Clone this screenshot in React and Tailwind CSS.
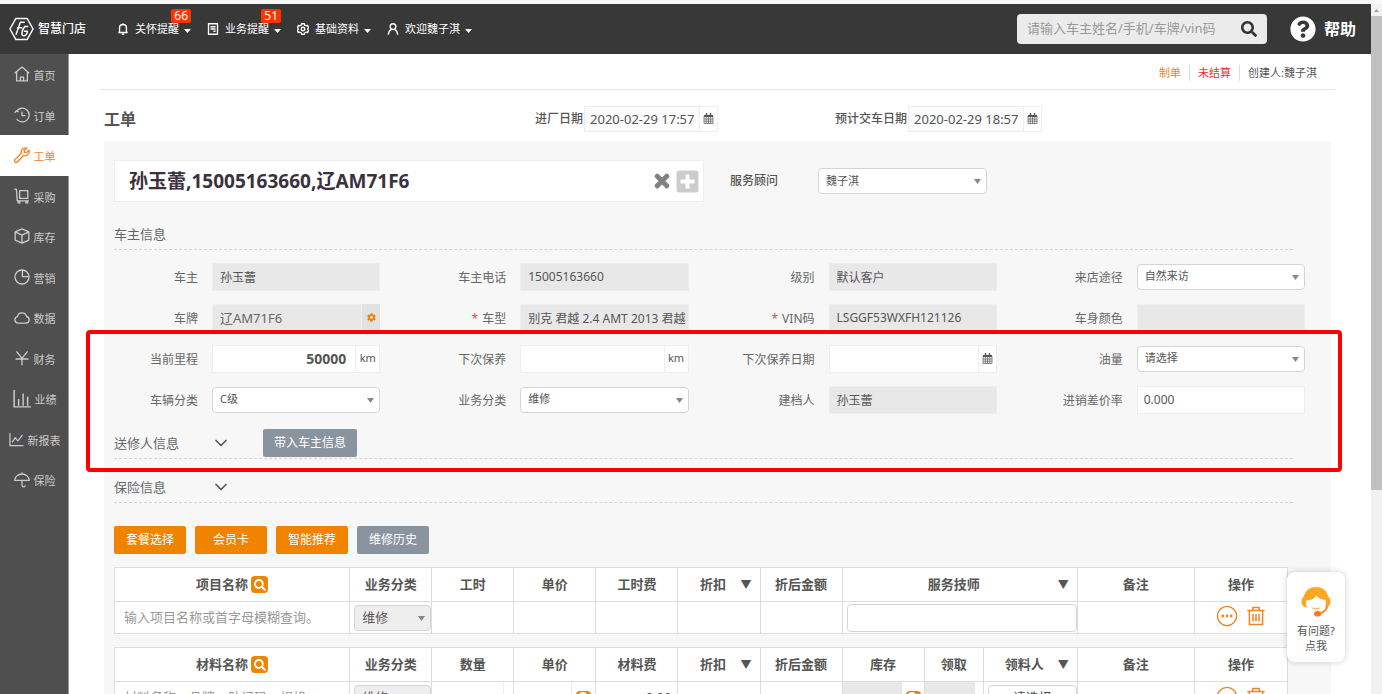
import { FaCog, FaPlusSquare, FaQuestionCircle, FaSearch, FaTimes } from "react-icons/fa";
import { ChevronDown } from "lucide-react";

function LineIcon({ children, className = "size-4", strokeWidth = 1.3 }) {
  return (
    <svg
      viewBox="0 0 16 16"
      className={className}
      fill="none"
      stroke="currentColor"
      strokeWidth={strokeWidth}
      strokeLinejoin="round"
      aria-hidden="true"
    >
      {children}
    </svg>
  );
}

const menuItems = [
  {
    name: "首页",
    icon: (
      <LineIcon>
        <path d="M.7 7.2 8 .9l7.3 6.3M2.6 5.8v9h10.8v-9M6.4 14.8v-3.6h3.2v3.6" />
      </LineIcon>
    ),
  },
  {
    name: "订单",
    icon: (
      <LineIcon>
        <path d="M2.4 4.4A6.9 6.9 0 1 1 2.6 12M.6 5.8l1.6-2 2.4 1M8 4.4v4.2h3.4" />
      </LineIcon>
    ),
  },
  {
    name: "工单",
    active: true,
    icon: (
      <LineIcon>
        <path d="M12.9 1.2a4.1 4.1 0 0 0-5.5 5L1 12.4a1.5 1.5 0 0 0 2.5 2.4l6.1-6.3a4.1 4.1 0 0 0 5.3-5.3l-2.5 2.4-1.9-.2-.3-1.8z" />
      </LineIcon>
    ),
  },
  {
    name: "采购",
    icon: (
      <LineIcon>
        <path d="M.2 1.2h2.200l.8 11.600h11.600M5.600 2.600h8.200v7.800H5.600z" />
        <circle cx="5" cy="14.2" r="1" />
        <circle cx="12.8" cy="14.2" r="1" />
      </LineIcon>
    ),
  },
  {
    name: "库存",
    icon: (
      <LineIcon>
        <path d="m8 .9 6.8 3v8.2L8 15.2l-6.8-3.1V3.9zM1.2 3.9 8 7.2l6.8-3.3M8 7.2v8" />
      </LineIcon>
    ),
  },
  {
    name: "营销",
    icon: (
      <LineIcon>
        <circle cx="8" cy="8" r="7" />
        <path d="M8.4 1v6.6H15" />
      </LineIcon>
    ),
  },
  {
    name: "数据",
    icon: (
      <LineIcon>
        <path d="M4 13.2a3.300 3.300 0 0 1-.5-6.500 4.600 4.600 0 0 1 9-.2 3.400 3.400 0 0 1-.4 6.700z" />
      </LineIcon>
    ),
  },
  {
    name: "财务",
    icon: (
      <LineIcon>
        <path d="m2.400 1.400 5.600 7 5.600-7M8 8.400v6.800M1.600 9h12.800" />
      </LineIcon>
    ),
  },
  {
    name: "业绩",
    icon: (
      <LineIcon className="size-[18px]">
        <path d="M1 0v15h15M5 14V8M9 14V3M13 14V6" />
      </LineIcon>
    ),
  },
  {
    name: "新报表",
    icon: (
      <LineIcon className="size-[15px]">
        <path d="M1 1v13.600h14.400M3.400 11l3.200-5 2.800 3.600L14.400 3" />
      </LineIcon>
    ),
  },
  {
    name: "保险",
    icon: (
      <LineIcon>
        <path d="M.8 8.400a7.200 6.400 0 0 1 14.400 0zM8 .6v1.600M8 8.400v4.800a1.600 1.600 0 0 0 3.200 0" />
      </LineIcon>
    ),
  },
];

const topMenus = [
  {
    name: "关怀提醒",
    badge: "66",
    icon: (
      <LineIcon className="size-3" strokeWidth={1.8}>
        <path d="M3.400 12V6.600a4.600 4.600 0 0 1 9.200 0V12M1.800 12.600h12.400M6.400 15h3.200M8 .2V2" />
      </LineIcon>
    ),
  },
  {
    name: "业务提醒",
    badge: "51",
    icon: (
      <LineIcon className="size-3" strokeWidth={1.8}>
        <path d="M2 1h12v14H2zM4.600 5h6.800M4.600 8h6.800M8.600 11h2.800" />
      </LineIcon>
    ),
  },
  {
    name: "基础资料",
    icon: (
      <LineIcon className="size-3" strokeWidth={1.8}>
        <path d="m6.200 1-.6 2-2 .9-1.800-.6L.6 6l1.300 2L.6 10l1.200 2.700 1.800-.6 2 .9.6 2h3.600l.6-2 2-.9 1.800.6 1.200-2.700-1.300-2 1.300-2-1.200-2.700-1.800.6-2-.9-.6-2z" />
        <circle cx="8" cy="8" r="2.400" />
      </LineIcon>
    ),
  },
  {
    name: "欢迎魏子淇",
    icon: (
      <LineIcon className="size-3" strokeWidth={1.8}>
        <circle cx="8" cy="4.8" r="3.8" />
        <path d="M1.800 15.600c.2-4 1.600-6 4.200-7.200M14.200 15.600c-.2-4-1.600-6-4.200-7.200" />
      </LineIcon>
    ),
  },
];

function CalendarIcon() {
  return (
    <svg viewBox="0 0 11 11" className="size-[11px]" fill="none" stroke="currentColor" aria-hidden="true">
      <path d="M1 3h9" strokeWidth="2" />
      <path d="M3.500 0v3M7.500 0v3" strokeWidth="1.400" />
      <path d="M1 3v7.500h9V3M1 6h9M1 8.200h9M3.300 4v6.500M5.500 4v6.500M7.700 4v6.500" strokeWidth=".7" />
    </svg>
  );
}

function Logo() {
  return (
    <a href="#home" className="flex items-center gap-1 text-white">
      <svg
        viewBox="0 0 26 24"
        className="h-6 w-[25px]"
        fill="none"
        stroke="currentColor"
        strokeWidth="1.5"
        strokeLinejoin="round"
        aria-hidden="true"
      >
        <path d="M7.200 1h11.600L25 12l-6.200 11H7.200L1 12z" />
        <path d="M16.400 5h-4.600L7.200 18M8.200 10.600h5.600M20 9.400h-3.600c-1.600 2-3 5-3 7.200 0 1.600.8 2.400 2 2.400 2 0 3.200-1.600 3.800-4.600h-3.600" />
      </svg>
      <span className="text-xs font-medium">智慧门店</span>
    </a>
  );
}

function Header() {
  return (
    <header className="flex h-[50px] items-center bg-[#383838] pr-[15px] pl-[9px] text-white">
      <Logo />
      <nav className="ml-[31px] flex items-center gap-4">
        {topMenus.map((menu) => (
          <button key={menu.name} type="button" className="relative flex items-center text-[11px]">
            {menu.icon}
            <span className="ml-[6px]">{menu.name}</span>
            <svg viewBox="0 0 7 4" className="mt-1 ml-[5px] h-1 w-[7px] fill-current" aria-hidden="true">
              <path d="M0 0h7L3.500 4z" />
            </svg>
            {menu.badge && (
              <span className="absolute -top-3 right-0 rounded-xs bg-[#ff3300] px-[3px] text-xs leading-[14px]">
                {menu.badge}
              </span>
            )}
          </button>
        ))}
      </nav>
      <form className="ml-auto flex h-[30px] w-[250px] items-center rounded-sm bg-[#ebebeb] px-[10px]">
        <input
          type="search"
          aria-label="搜索"
          placeholder="请输入车主姓名/手机/车牌/vin码"
          className="min-w-0 flex-1 bg-transparent text-[13px] outline-none placeholder:text-[#999]"
        />
        <button type="button" aria-label="搜索" className="text-[#333]">
          <FaSearch className="size-4" />
        </button>
      </form>
      <a href="#help" className="ml-[23px] flex items-center gap-2 text-base font-bold">
        <FaQuestionCircle className="size-[26px]" />
        帮助
      </a>
    </header>
  );
}

function Sidebar() {
  return (
    <aside className="w-[69px] shrink-0 border-r border-[#999] bg-[#4f4f4f]">
      <nav className="flex h-[446px] flex-col">
        {menuItems.map((item) => (
          <a
            key={item.name}
            href="#menu"
            className={
              item.active
                ? "-mr-px flex flex-1 items-center justify-center gap-1 bg-white text-[11px] text-[#f5821f]"
                : "flex flex-1 items-center justify-center gap-1 pl-px text-[11px] text-[#ccc]"
            }
          >
            {item.icon}
            <span className="pt-1">{item.name}</span>
          </a>
        ))}
      </nav>
    </aside>
  );
}

function SelectBox({ id, value, className = "h-[26px] border-[#d5d5d5] bg-white text-[11px]", label }) {
  return (
    <div className="relative min-w-0 flex-1">
      <select
        id={id}
        aria-label={label}
        className={`block w-full appearance-none rounded-sm border px-[7px] outline-none ${className}`}
      >
        <option>{value}</option>
      </select>
      <svg
        viewBox="0 0 7 5"
        className="pointer-events-none absolute top-[11px] right-[6px] h-[5px] w-[7px] fill-[#888]"
        aria-hidden="true"
      >
        <path d="M0 0h7L3.500 5z" />
      </svg>
    </div>
  );
}

function Field({ id, label, required, children }) {
  return (
    <div className="flex items-center">
      <label htmlFor={id} className="w-[84px] shrink-0 pt-[2px] text-right text-xs text-[#666]">
        {required && <span className="mr-1 text-[#e05050]">*</span>}
        {label}
      </label>
      <div className="ml-[14px] flex min-w-0 flex-1">{children}</div>
    </div>
  );
}

function ReadOnlyField({ id, label, value, required }) {
  return (
    <Field id={id} label={label} required={required}>
      <input
        id={id}
        readOnly
        defaultValue={value}
        className="h-7 w-full min-w-0 border border-[#eee] bg-[#e8e8e8] pl-[7px] text-xs outline-none"
      />
    </Field>
  );
}

function SelectField({ id, label, value }) {
  return (
    <Field id={id} label={label}>
      <SelectBox id={id} value={value} />
    </Field>
  );
}

function AddonField({ id, label, value, addon, className = "w-6" }) {
  return (
    <Field id={id} label={label}>
      <input
        id={id}
        defaultValue={value}
        className="h-7 min-w-0 flex-1 border border-[#eee] bg-white px-[9px] text-right text-sm font-bold outline-none"
      />
      <span
        className={`flex h-7 shrink-0 items-center justify-center border-y border-r border-[#eee] bg-white text-[11px] ${className}`}
      >
        {addon}
      </span>
    </Field>
  );
}

function DateField({ id, label, value }) {
  return (
    <div className="flex w-[300px] items-center">
      <label htmlFor={id} className="mr-px text-xs font-medium">
        {label}
      </label>
      <input
        id={id}
        defaultValue={value}
        className="h-[26px] w-[116px] border border-[#eee] bg-[#fbfbfb] pl-[5px] text-[13px] outline-none"
      />
      <button
        type="button"
        aria-label={label}
        className="flex h-[26px] w-[18px] items-center justify-center border-y border-r border-[#eee]"
      >
        <CalendarIcon />
      </button>
    </div>
  );
}

function CustomerForm() {
  return (
    <div className="grid auto-rows-[41px] grid-cols-4 gap-x-[42px] pt-[6px]">
      <ReadOnlyField id="owner" label="车主" value="孙玉蕾" />
      <ReadOnlyField id="phone" label="车主电话" value="15005163660" />
      <ReadOnlyField id="level" label="级别" value="默认客户" />
      <SelectField id="source" label="来店途径" value="自然来访" />

      <Field id="plate" label="车牌">
        <input
          id="plate"
          readOnly
          defaultValue="辽AM71F6"
          className="h-7 min-w-0 flex-1 border border-[#eee] bg-[#e8e8e8] pl-[7px] text-[13px] text-[#666] outline-none"
        />
        <button
          type="button"
          aria-label="设置车牌"
          className="flex h-7 w-[18px] items-center justify-center bg-[#e2e2e2] text-[#f08300]"
        >
          <FaCog className="size-[9px]" />
        </button>
      </Field>
      <ReadOnlyField id="model" label="车型" value="别克 君越 2.4 AMT 2013 君越" required />
      <ReadOnlyField id="vin" label="VIN码" value="LSGGF53WXFH121126" required />
      <ReadOnlyField id="color" label="车身颜色" value="" />

      <AddonField id="mileage" label="当前里程" value="50000" addon="km" />
      <AddonField id="next-mileage" label="下次保养" value="" addon="km" />
      <AddonField id="next-date" label="下次保养日期" value="" addon={<CalendarIcon />} className="w-[18px]" />
      <SelectField id="fuel" label="油量" value="请选择" />

      <SelectField id="car-type" label="车辆分类" value="C级" />
      <SelectField id="biz-type" label="业务分类" value="维修" />
      <ReadOnlyField id="creator" label="建档人" value="孙玉蕾" />
      <Field id="rate" label="进销差价率">
        <input
          id="rate"
          defaultValue="0.000"
          className="h-7 w-full min-w-0 border border-[#eee] bg-white pl-[6px] text-xs outline-none"
        />
      </Field>
    </div>
  );
}

function SearchButton({ label, className = "size-[17px]" }) {
  return (
    <button
      type="button"
      aria-label={label}
      className={`flex shrink-0 items-center justify-center rounded-sm bg-[#f08300] text-white ${className}`}
    >
      <FaSearch className="size-3" />
    </button>
  );
}

function HeadCell({ children, search, arrow, colSpan }) {
  return (
    <th colSpan={colSpan} className="relative border border-[#ddd] p-0 font-bold">
      <div className="flex items-center justify-center gap-[3px]">
        <span className={arrow ? "pr-3" : ""}>{children}</span>
        {search && <SearchButton label={`搜索${children}`} />}
      </div>
      {arrow && <span className="absolute top-1/2 right-2 -translate-y-1/2 text-[11px]">▼</span>}
    </th>
  );
}

function RowActions() {
  return (
    <div className="flex items-center justify-center gap-2 pb-[3px] text-[#f08322]">
      <button type="button" aria-label="更多">
        <svg viewBox="0 0 22 22" className="size-[22px]" aria-hidden="true">
          <circle cx="11" cy="11" r="9.6" fill="none" stroke="currentColor" strokeWidth="1.4" />
          <g fill="currentColor">
            <circle cx="6.8" cy="11" r="1.4" />
            <circle cx="11" cy="11" r="1.4" />
            <circle cx="15.2" cy="11" r="1.4" />
          </g>
        </svg>
      </button>
      <button type="button" aria-label="删除">
        <svg
          viewBox="0 0 20 20"
          className="size-5"
          fill="none"
          stroke="currentColor"
          strokeWidth="1.5"
          aria-hidden="true"
        >
          <path d="M1.400 4.600h17.200M6.400 4.400 7 1.600h6l.6 2.800M3.400 4.600v14h13.200v-14M7 8v7.600M10 8v7.600M13 8v7.600" />
        </svg>
      </button>
    </div>
  );
}

const cell = "border border-[#ddd] p-0";

function ItemColumns() {
  return (
    <colgroup>
      <col className="w-[235px]" />
      <col className="w-[82px]" />
      <col className="w-[82px]" />
      <col className="w-[82px]" />
      <col className="w-[82px]" />
      <col className="w-[82px]" />
      <col className="w-[82px]" />
      <col className="w-[82px]" />
      <col className="w-[59px]" />
      <col className="w-[94px]" />
      <col className="w-[117px]" />
      <col className="w-[93px]" />
    </colgroup>
  );
}

function ProjectTable() {
  return (
    <table className="w-full table-fixed border-collapse bg-white text-[13px]">
      <ItemColumns />
      <thead>
        <tr className="h-[34px]">
          <HeadCell search>项目名称</HeadCell>
          <HeadCell>业务分类</HeadCell>
          <HeadCell>工时</HeadCell>
          <HeadCell>单价</HeadCell>
          <HeadCell>工时费</HeadCell>
          <HeadCell arrow>折扣</HeadCell>
          <HeadCell>折后金额</HeadCell>
          <HeadCell arrow colSpan={3}>
            服务技师
          </HeadCell>
          <HeadCell>备注</HeadCell>
          <HeadCell>操作</HeadCell>
        </tr>
      </thead>
      <tbody>
        <tr className="h-8">
          <td className={cell}>
            <input
              aria-label="项目名称"
              placeholder="输入项目名称或首字母模糊查询。"
              className="block w-full px-[9px] outline-none placeholder:text-[#999]"
            />
          </td>
          <td className={`${cell} pl-1`}>
            <SelectBox label="业务分类" value="维修" className="h-[26px] border-[#d5d5d5] bg-[#eee] text-[13px]" />
          </td>
          <td className={cell}></td>
          <td className={cell}></td>
          <td className={cell}></td>
          <td className={cell}></td>
          <td className={cell}></td>
          <td colSpan={3} className={`${cell} pl-1`}>
            <input
              aria-label="服务技师"
              className="block h-7 w-full rounded-sm border border-[#d5d5d5] px-2 outline-none"
            />
          </td>
          <td className={cell}></td>
          <td className={cell}>
            <RowActions />
          </td>
        </tr>
      </tbody>
    </table>
  );
}

function MaterialTable() {
  return (
    <table className="w-full table-fixed border-collapse bg-white text-[13px]">
      <ItemColumns />
      <thead>
        <tr className="h-[34px]">
          <HeadCell search>材料名称</HeadCell>
          <HeadCell>业务分类</HeadCell>
          <HeadCell>数量</HeadCell>
          <HeadCell>单价</HeadCell>
          <HeadCell>材料费</HeadCell>
          <HeadCell arrow>折扣</HeadCell>
          <HeadCell>折后金额</HeadCell>
          <HeadCell>库存</HeadCell>
          <HeadCell>领取</HeadCell>
          <HeadCell arrow>领料人</HeadCell>
          <HeadCell>备注</HeadCell>
          <HeadCell>操作</HeadCell>
        </tr>
      </thead>
      <tbody>
        <tr className="h-8">
          <td className={cell}>
            <input
              aria-label="材料名称"
              placeholder="材料名称、品牌、助记码、规格"
              className="block w-full px-[9px] outline-none placeholder:text-[#999]"
            />
          </td>
          <td className={`${cell} pl-1`}>
            <SelectBox label="业务分类" value="维修" className="h-[26px] border-[#d5d5d5] bg-[#eee] text-[13px]" />
          </td>
          <td className={cell}>
            <input aria-label="数量" className="block h-8 w-[72px] border-r border-[#eee] px-1 outline-none" />
          </td>
          <td className={cell}>
            <div className="flex items-center gap-1">
              <input aria-label="单价" className="h-8 w-[58px] border-r border-[#eee] px-1 outline-none" />
              <SearchButton label="搜索单价" className="size-[15px]" />
            </div>
          </td>
          <td className={`${cell} pr-[6px] text-right`}>0.00</td>
          <td className={cell}></td>
          <td className={cell}></td>
          <td className={cell}>
            <div className="flex items-center gap-1">
              <span className="h-8 w-[59px] bg-[#e8e8e8] pr-[6px] text-right leading-8">0.0</span>
              <SearchButton label="搜索库存" className="size-[15px]" />
            </div>
          </td>
          <td className={cell}>
            <div className="h-8 w-[50px] bg-[#e8e8e8] pr-[6px] text-right leading-8">0</div>
          </td>
          <td className={`${cell} pl-1`}>
            <SelectBox
              label="领料人"
              value="请选择"
              className="h-[26px] border-[#d5d5d5] bg-white text-center text-[13px]"
            />
          </td>
          <td className={cell}></td>
          <td className={cell}>
            <RowActions />
          </td>
        </tr>
      </tbody>
    </table>
  );
}

function WorkOrder() {
  return (
    <main className="min-w-0 flex-1 bg-white pr-9 pl-[30px]">
      {/* Status */}
      <div className="flex h-9 items-center justify-end border-b border-[#e5e5e5] pt-[3px] pr-[18px] text-[11px]">
        <span className="text-[#f5821f]">制单</span>
        <span className="mx-2 h-4 border-l border-[#ddd]"></span>
        <span className="text-[#f03030]">未结算</span>
        <span className="mx-2 h-4 border-l border-[#ddd]"></span>
        <span>创建人:魏子淇</span>
      </div>

      {/* Title */}
      <div className="flex h-[51px] items-center pt-[6px] pl-[5px]">
        <h1 className="w-[431px] text-base font-bold">工单</h1>
        <DateField id="in-date" label="进厂日期" value="2020-02-29 17:57" />
        <DateField id="out-date" label="预计交车日期" value="2020-02-29 18:57" />
      </div>

      {/* Order */}
      <div className="relative mr-1 ml-[5px] bg-[#f7f7f7] pt-[19px] pr-[26px] pb-10 pl-[10px]">
        <div className="flex items-center">
          <div className="flex h-[42px] w-[590px] items-center border border-[#eee] bg-white pr-[3px] pl-[14px]">
            <input
              aria-label="客户"
              defaultValue="孙玉蕾,15005163660,辽AM71F6"
              className="min-w-0 flex-1 text-[19px] font-bold text-[#3d3040] outline-none"
            />
            <button type="button" aria-label="清除" className="text-[#808080]">
              <FaTimes className="size-5" stroke="currentColor" strokeWidth="30" />
            </button>
            <button type="button" aria-label="添加" className="ml-[3px] text-[#ccc]">
              <FaPlusSquare className="size-[25px]" />
            </button>
          </div>
          <label htmlFor="advisor" className="ml-[26px] w-[88px] text-xs font-medium">
            服务顾问
          </label>
          <div className="flex w-[169px]">
            <SelectBox id="advisor" value="魏子淇" />
          </div>
        </div>

        <div className="mr-3 border-b border-dashed border-[#d5d5d5] pt-[22px] pb-[5px]">
          <h2 className="text-[13px] leading-5 text-[#666]">车主信息</h2>
        </div>
        <CustomerForm />

        <div className="mr-3 flex items-center border-b border-dashed border-[#d5d5d5] pt-[9px] pb-px">
          <h2 className="w-[97px] text-[13px] leading-5 text-[#666]">送修人信息</h2>
          <button type="button" aria-label="展开送修人信息">
            <ChevronDown className="size-5" strokeWidth={2} />
          </button>
          <button type="button" className="ml-8 h-7 rounded-xs bg-[#8a949f] px-[11px] text-xs text-white">
            带入车主信息
          </button>
        </div>

        <div className="mr-3 flex items-center border-b border-dashed border-[#d5d5d5] pt-[18px] pb-[5px]">
          <h2 className="w-[97px] text-[13px] leading-5 text-[#666]">保险信息</h2>
          <button type="button" aria-label="展开保险信息">
            <ChevronDown className="size-5" strokeWidth={2} />
          </button>
        </div>

        <div className="flex gap-[9px] pt-[23px] text-xs text-white">
          <button type="button" className="h-7 w-[72px] rounded-xs bg-[#f08300]">
            套餐选择
          </button>
          <button type="button" className="h-7 w-[72px] rounded-xs bg-[#f08300]">
            会员卡
          </button>
          <button type="button" className="h-7 w-[72px] rounded-xs bg-[#f08300]">
            智能推荐
          </button>
          <button type="button" className="h-7 w-[72px] rounded-xs bg-[#8a949f]">
            维修历史
          </button>
        </div>

        <div className="mr-[17px] flex flex-col gap-[13px] pt-[13px]">
          <ProjectTable />
          <MaterialTable />
        </div>

        {/* Highlighted area */}
        <div className="pointer-events-none absolute top-[189px] -right-[11px] -left-[18px] h-[142px] rounded-sm border-4 border-[#ff0000]"></div>
      </div>
    </main>
  );
}

function HelpWidget() {
  return (
    <a
      href="#service"
      className="absolute right-[37px] bottom-8 flex w-[58px] flex-col items-center rounded-lg bg-white pt-[14px] pb-[9px] text-[11px] leading-[15px] shadow-[0_0_6px_rgba(0,0,0,0.2)]"
    >
      <svg viewBox="0 0 30 32" className="mb-[5px] h-8 w-[30px]" aria-hidden="true">
        <path
          d="M15 1C8.400 1 3.600 5.200 2.800 10.800 1.200 11.600.4 13.200.4 15.600c0 2.800 1.200 4.800 3.600 5.600l2 .4c-1-2.400-1.200-5-.6-7.400 4.600.4 8-1.400 9.800-4.600 2.200 2.800 5.200 4.200 9.400 4.400.6 2.600.4 5.200-.6 7.600l2-.4c2.400-.8 3.600-2.800 3.600-5.600 0-2.400-.8-4-2.400-4.800C26.400 5.200 21.600 1 15 1z"
          fill="#ffa722"
        />
        <path d="M11.400 21.800c1.800 1.600 5.400 1.600 7.200 0" fill="none" stroke="#ffb76a" strokeWidth="1.400" />
        <path d="M26.400 20c-1 4.200-4 6.800-9 7.600" fill="none" stroke="#ff8a1c" strokeWidth="1.800" />
        <ellipse cx="16.600" cy="27.800" rx="3.600" ry="2.800" fill="#ff7a1c" />
      </svg>
      <span>有问题?</span>
      <span>点我</span>
    </a>
  );
}

export default function App() {
  return (
    <div className="relative flex h-screen flex-col overflow-hidden bg-white font-['Noto_Sans','Noto_Sans_CJK_SC',sans-serif] text-[#555]">
      <div className="h-1 shrink-0 bg-[#f8f8f8]"></div>
      <div className="flex min-h-0 flex-1">
        <div className="flex min-w-0 flex-1 flex-col">
          <Header />
          <div className="flex min-h-0 flex-1">
            <Sidebar />
            <WorkOrder />
          </div>
        </div>
        {/* Scrollbar */}
        <div className="flex w-[11px] shrink-0 flex-col items-center bg-[#f1f1f1]">
          <svg viewBox="0 0 5 12" className="h-3 w-[5px] fill-[#a0a0a0]" aria-hidden="true">
            <path d="M0 8h5L2.500 5z" />
          </svg>
          <div className="h-[474px] w-full bg-[#c1c1c1]"></div>
        </div>
      </div>
      <HelpWidget />
    </div>
  );
}
